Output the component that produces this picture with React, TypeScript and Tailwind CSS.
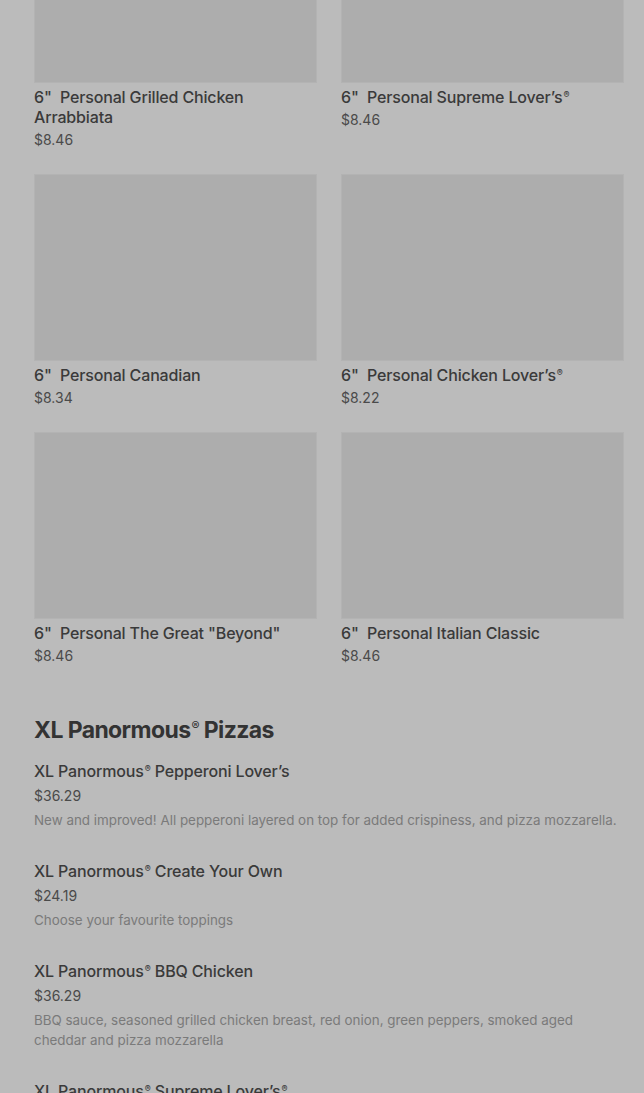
import React from "react";

const personal = [
  { name: '6"\u00a0\u00a0Personal Grilled Chicken Arrabbiata', price: "$8.46" },
  { name: '6"\u00a0\u00a0Personal Supreme Lover\u2019s\u00ae', price: "$8.46" },
  { name: '6"\u00a0\u00a0Personal Canadian', price: "$8.34" },
  { name: '6"\u00a0\u00a0Personal Chicken Lover\u2019s\u00ae', price: "$8.22" },
  { name: '6"\u00a0\u00a0Personal The Great "Beyond"', price: "$8.46" },
  { name: '6"\u00a0\u00a0Personal Italian Classic', price: "$8.46" },
];

const xl = [
  {
    name: "XL Panormous\u00ae Pepperoni Lover\u2019s",
    price: "$36.29",
    desc: "New and improved! All pepperoni layered on top for added crispiness, and pizza mozzarella.",
  },
  {
    name: "XL Panormous\u00ae Create Your Own",
    price: "$24.19",
    desc: "Choose your favourite toppings",
  },
  {
    name: "XL Panormous\u00ae BBQ Chicken",
    price: "$36.29",
    desc: "BBQ sauce, seasoned grilled chicken breast, red onion, green peppers, smoked aged cheddar and pizza mozzarella",
  },
  {
    name: "XL Panormous\u00ae Supreme Lover\u2019s\u00ae",
    price: "$36.29",
    desc: "Pepperoni, mushrooms, green peppers, Italian sausage and pizza mozzarella",
  },
];

function Name({ text }: { text: string }) {
  const parts = text.split("\u00ae");
  return (
    <>
      {parts.map((p, i) => (
        <React.Fragment key={i}>
          {p}
          {i < parts.length - 1 && (
            <span className="relative top-[-5px] ml-[1px] text-[9px] leading-none">®</span>
          )}
        </React.Fragment>
      ))}
    </>
  );
}

export default function App() {
  return (
    <div
      className="min-h-[1093px] w-full overflow-hidden bg-[#bbbbbb] pl-[34px] pr-[20px]"
      style={{ fontFamily: "Inter, 'Noto Sans', sans-serif" }}
    >
      <div className="mt-[-104px] grid grid-cols-2 gap-x-[24px] gap-y-[24px]">
        {personal.map((p, i) => (
          <div key={i} className="flex flex-col">
            <div className="h-[187px] w-full border border-[#b3b3b3] bg-[#adadad]" />
            <div className="mt-[4px] text-[16px] leading-[20px] font-medium text-[#3a3a3a] tracking-[-0.15px]">
              <Name text={p.name} />
            </div>
            <div className="mt-[3px] text-[14px] leading-[20px] text-[#4a4a4a]">{p.price}</div>
          </div>
        ))}
      </div>

      <h2 className="mt-[48px] text-[23px] leading-[32px] font-bold tracking-[-0.6px] text-[#333333]">
        XL Panormous<span className="relative top-[-8px] ml-[1px] text-[12px] font-medium leading-none">®</span> Pizzas
      </h2>

      <div className="mt-[15px] flex flex-col gap-[31px]">
        {xl.map((x, i) => (
          <div key={i} className="flex flex-col">
            <div className="text-[16px] leading-[20px] font-medium text-[#3a3a3a] tracking-[-0.15px]">
              <Name text={x.name} />
            </div>
            <div className="mt-[5px] text-[14px] leading-[20px] text-[#4a4a4a]">{x.price}</div>
            <div className="mt-[4px] text-[13.4px] leading-[20px] text-[#7a7a7a]">{x.desc}</div>
          </div>
        ))}
      </div>
    </div>
  );
}
